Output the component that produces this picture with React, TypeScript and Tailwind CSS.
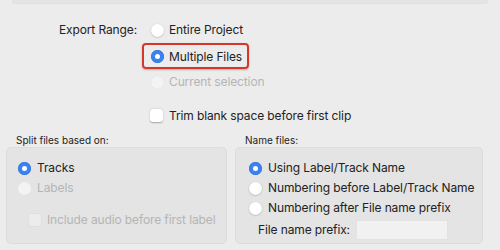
import React from 'react';

function Radio({ checked, disabled }: { checked?: boolean; disabled?: boolean }) {
  if (checked) {
    return (
      <span className="flex h-[13px] w-[13px] shrink-0 items-center justify-center rounded-full bg-[#3b82f0] shadow-[inset_0_0_0_0.5px_#2c6fd8]">
        <span className="h-[5px] w-[5px] rounded-full bg-white" />
      </span>
    );
  }
  return (
    <span
      className={
        disabled
          ? 'h-[13px] w-[13px] shrink-0 rounded-full bg-[#f3f3f3] shadow-[0_0_0_0.5px_#e2e2e2]'
          : 'h-[13px] w-[13px] shrink-0 rounded-full bg-white shadow-[0_0.5px_1.5px_rgba(0,0,0,0.28)]'
      }
    />
  );
}

function Checkbox({ disabled }: { disabled?: boolean }) {
  return (
    <span
      className={
        disabled
          ? 'h-[12px] w-[12px] shrink-0 rounded-[3px] bg-[#ececec] shadow-[0_0_0_0.5px_#dadada]'
          : 'h-[13px] w-[13px] shrink-0 rounded-[3px] bg-white shadow-[0_0.5px_1.5px_rgba(0,0,0,0.3)]'
      }
    />
  );
}

export default function App() {
  return (
    <div className="h-[250px] w-[500px] overflow-hidden whitespace-nowrap bg-[#ececec] font-['Inter',sans-serif] text-[12px] tracking-[-0.12px] text-[#222222]">
      <div className="mx-[12px] h-[3px] rounded-b-[4px] bg-[#e4e4e4] shadow-[0_1px_1px_rgba(0,0,0,0.05)]" />

      <div className="flex pt-[14px]">
        <div className="h-[26px] w-[138px] pr-[1px] text-right leading-[26px]">Export Range:</div>
        <div className="flex flex-col pl-[13px]">
          <label className="flex h-[26px] items-center gap-[5px] leading-none">
            <Radio />
            <span>Entire Project</span>
          </label>
          <label className="-ml-[9px] flex h-[26px] w-[107px] items-center gap-[5px] rounded-[4px] border-2 border-[#d6372b] pl-[7px] leading-none shadow-[0_1px_2px_rgba(0,0,0,0.25)]">
            <Radio checked />
            <span className="pt-[1px]">Multiple Files</span>
          </label>
          <label className="flex h-[26px] items-center gap-[5px] leading-none text-[#b5b5b5]">
            <Radio disabled />
            <span>Current selection</span>
          </label>
        </div>
      </div>

      <label className="mt-[14px] flex items-center gap-[6px] pl-[150px] leading-none">
        <Checkbox />
        <span>Trim blank space before first clip</span>
      </label>

      <div className="mt-[12px] flex gap-[8px] pl-[6px]">
        <div className="flex w-[221px] flex-col">
          <div className="pl-[10px] text-[10px] leading-[13px] tracking-normal">Split files based on:</div>
          <div className="h-[97px] rounded-[5px] border border-[#dcdcdc] bg-[#e4e4e4] pl-[11px] pt-[10px]">
            <label className="flex h-[20px] items-center gap-[6px] leading-none">
              <Radio checked />
              <span>Tracks</span>
            </label>
            <label className="flex h-[20px] items-center gap-[6px] leading-none text-[#b5b5b5]">
              <Radio disabled />
              <span>Labels</span>
            </label>
            <label className="mt-[16px] flex items-center gap-[6px] pl-[11px] leading-none text-[#b5b5b5]">
              <Checkbox disabled />
              <span>Include audio before first label</span>
            </label>
          </div>
        </div>

        <div className="flex w-[248px] flex-col">
          <div className="pl-[10px] text-[10px] leading-[13px] tracking-normal">Name files:</div>
          <div className="h-[97px] rounded-[5px] border border-[#dcdcdc] bg-[#e4e4e4] pl-[13px] pt-[10px]">
            <label className="flex h-[20px] items-center gap-[6px] leading-none">
              <Radio checked />
              <span>Using Label/Track Name</span>
            </label>
            <label className="flex h-[20px] items-center gap-[6px] leading-none">
              <Radio />
              <span>Numbering before Label/Track Name</span>
            </label>
            <label className="flex h-[20px] items-center gap-[6px] leading-none">
              <Radio />
              <span>Numbering after File name prefix</span>
            </label>
            <div className="mt-[2px] flex h-[19px] items-center gap-[7px] pl-[9px]">
              <span>File name prefix:</span>
              <span className="h-[18px] w-[90px] bg-[#f1f1f1] shadow-[0_0_0_0.5px_#e0e0e0]" />
            </div>
          </div>
        </div>
      </div>
    </div>
  );
}
